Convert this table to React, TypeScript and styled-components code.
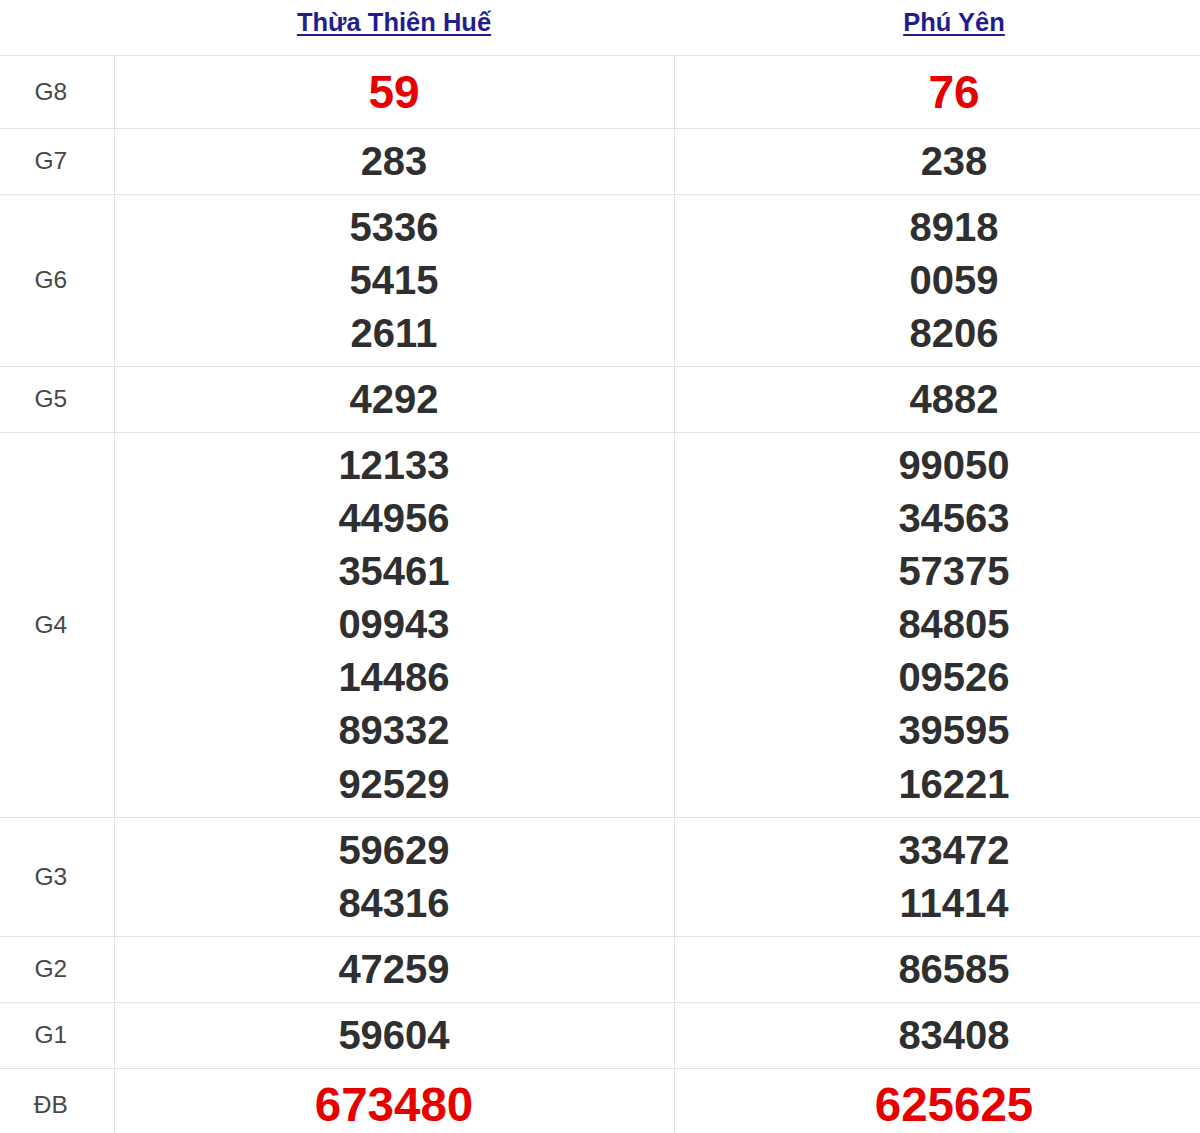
import React, {ReactElement} from 'react';
import styled, {createGlobalStyle} from 'styled-components';

type Tier = 'normal' | 'eighth' | 'jackpot';

type Prize = {
    label: string;
    tier: Tier;
    hue: string[];
    phuYen: string[];
};

const prizes: Prize[] = [
    {label: 'G8', tier: 'eighth', hue: ['59'], phuYen: ['76']},
    {label: 'G7', tier: 'normal', hue: ['283'], phuYen: ['238']},
    {label: 'G6', tier: 'normal', hue: ['5336', '5415', '2611'], phuYen: ['8918', '0059', '8206']},
    {label: 'G5', tier: 'normal', hue: ['4292'], phuYen: ['4882']},
    {
        label: 'G4',
        tier: 'normal',
        hue: ['12133', '44956', '35461', '09943', '14486', '89332', '92529'],
        phuYen: ['99050', '34563', '57375', '84805', '09526', '39595', '16221'],
    },
    {label: 'G3', tier: 'normal', hue: ['59629', '84316'], phuYen: ['33472', '11414']},
    {label: 'G2', tier: 'normal', hue: ['47259'], phuYen: ['86585']},
    {label: 'G1', tier: 'normal', hue: ['59604'], phuYen: ['83408']},
    {label: 'ĐB', tier: 'jackpot', hue: ['673480'], phuYen: ['625625']},
];

const sizes: Record<Tier, string> = {normal: '40px', eighth: '46px', jackpot: '47.5px'};

const GlobalStyle = createGlobalStyle`
    html, body {
        margin: 0;
        padding: 0;
        background: #fff;
        overflow: hidden;
        font-family: "Liberation Sans", Arial, sans-serif;
    }
`;

export default function App(): ReactElement {
    return (
        <>
            <GlobalStyle />
            <ResultTable>
                <colgroup>
                    <col style={{width: 114}} />
                    <col style={{width: 560}} />
                    <col style={{width: 560}} />
                </colgroup>
                <thead>
                    <tr>
                        <HeadCell />
                        <HeadCell>
                            <ProvinceLink href="#">Thừa Thiên Huế</ProvinceLink>
                        </HeadCell>
                        <HeadCell>
                            <ProvinceLink href="#">Phú Yên</ProvinceLink>
                        </HeadCell>
                    </tr>
                </thead>
                <tbody>
                    {prizes.map((p) => (
                        <tr key={p.label}>
                            <LabelCell>{p.label}</LabelCell>
                            <NumberCell>
                                {p.hue.map((n, i) => (
                                    <Number key={i} $tier={p.tier}>
                                        {n}
                                    </Number>
                                ))}
                            </NumberCell>
                            <NumberCell>
                                {p.phuYen.map((n, i) => (
                                    <Number key={i} $tier={p.tier}>
                                        {n}
                                    </Number>
                                ))}
                            </NumberCell>
                        </tr>
                    ))}
                </tbody>
            </ResultTable>
        </>
    );
}

const ResultTable = styled.table`
    width: 1234px;
    table-layout: fixed;
    border-collapse: collapse;
    border-spacing: 0;
`;

const HeadCell = styled.th`
    box-sizing: border-box;
    height: 55px;
    padding: 0 0 11px;
    text-align: center;
    vertical-align: middle;
    border-bottom: 1px solid #e3e3e3;
`;

const ProvinceLink = styled.a`
    font-size: 25.5px;
    line-height: 30px;
    font-weight: bold;
    color: #221d8f;
    text-decoration: underline;
    text-underline-offset: 3px;
`;

const LabelCell = styled.td`
    padding: 0 12px 0 0;
    text-align: center;
    vertical-align: middle;
    font-size: 24.5px;
    color: #474747;
    border-bottom: 1px solid #e3e3e3;
    border-right: 1px solid #e3e3e3;
`;

const NumberCell = styled.td`
    padding: 6px 0;
    text-align: center;
    vertical-align: middle;
    border-bottom: 1px solid #e3e3e3;
    border-right: 1px solid #e3e3e3;
`;

const Number = styled.div<{$tier: Tier}>`
    font-weight: bold;
    font-size: ${({$tier}) => sizes[$tier]};
    line-height: ${({$tier}) => ($tier === 'normal' ? '53.1px' : '60px')};
    color: ${({$tier}) => ($tier === 'normal' ? '#2f2f2f' : '#e60000')};
`;
